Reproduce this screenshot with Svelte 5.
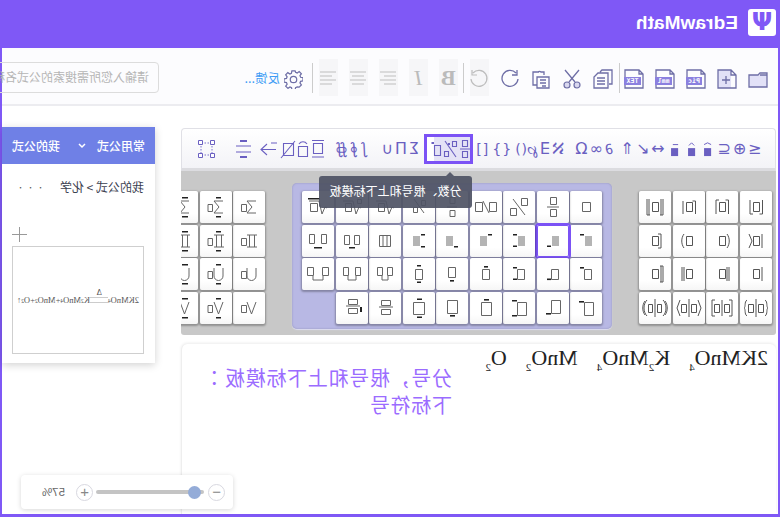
<script>
  // the whole page is shown flipped, so everything below is laid out left to right and mirrored once on .page
  const box = (x, y, w, h) => `M${x} ${y}h${w}v${h}h${-w}z`;

  const bar = (x, y, w = 4) => box(x, y, w, 1.6);
  const gray = (x = 10, w = 7) => box(x, 11, w, 10);

  const pre = { t: bar(18, 9), b: bar(18, 20.5), tb: bar(18, 9) + bar(18, 20.5) };
  const preL = { t: bar(10, 9), b: bar(10, 21), tb: bar(10, 9) + bar(10, 21) };

  const frac = (t = 6.5, w = 6, h = 7) => box(16 - w / 2 - 0.5, t, w, h) + box(16 - w / 2 - 0.5, 32 - t - h, w, h) + `M${16 - w} 16h${2 * w}`;

  const twoBoxes = (l, r, w, y, h) => box(l, y, w, h) + box(r, y, w, h);

  const purple = [
    [
      { o: box(11.5, 11.5, 8, 9) },
      { o: frac() },
      { o: box(7.5, 7.5, 6, 7) + box(18.5, 17.5, 6, 7) + 'M10 24L22 8' },
      { o: box(5.5, 11.5, 7, 9) + box(19.5, 11.5, 7, 9) + 'M13 22L19 10' },
      { o: frac(6.5, 5, 6) },
      { o: box(9.5, 9.5, 4, 5) + box(17.5, 16.5, 4, 5) + 'M11 22L21 8' },
      { o: 'M7 17l2-1 3 7 3-13h10' + box(16.5, 12.5, 6, 8) },
      { o: 'M7 17l2-1 3 7 3-13h10' + box(16.5, 12.5, 6, 8) + box(6.5, 8.5, 4, 4) },
      { o: 'M7 17l2-1 3 7 3-13h10' + box(16.5, 12.5, 7, 8), k: bar(14, 7, 12) }
    ],
    [
      { g: gray(), k: pre.t },
      { g: gray(), k: pre.b },
      { g: gray(), k: pre.tb },
      { g: gray(15), k: preL.t },
      { g: gray(15), k: preL.b },
      { g: gray(15), k: preL.tb },
      { o: box(10.5, 10.5, 11, 11) + 'M14 10.5v11M18 10.5v11' },
      { o: twoBoxes(8.5, 18.5, 5, 10.5, 9), k: bar(13, 22, 6) },
      { o: twoBoxes(7.5, 19.5, 5, 9.5, 9), k: bar(12, 22, 8) }
    ],
    [
      { o: box(10.5, 11.5, 7, 10), k: pre.t },
      { o: box(10.5, 11.5, 7, 10), k: pre.b },
      { o: box(10.5, 11.5, 7, 10), k: pre.tb },
      { o: box(12.5, 11.5, 7, 10), k: bar(14, 8) },
      { o: box(12.5, 9.5, 7, 10), k: bar(14, 22) },
      { o: box(12.5, 11.5, 7, 10), k: bar(14, 7) + bar(14, 23.5) },
      { o: twoBoxes(8.5, 18.5, 5, 9.5, 8) + 'M13 18v4h6v-4' },
      { o: twoBoxes(7.5, 19.5, 5, 9.5, 8) + 'M12 18v4h8v-4' },
      { o: twoBoxes(5.5, 20.5, 6, 9.5, 8) + 'M11 18v4h10v-4' }
    ],
    [
      { o: box(8.5, 10.5, 9, 13), k: bar(18, 9, 5) },
      { o: box(8.5, 8.5, 9, 13), k: bar(18, 21, 5) },
      { o: box(8.5, 10.5, 9, 13), k: bar(18, 8, 5) + bar(18, 23, 5) },
      { o: box(10.5, 10.5, 10, 13), k: bar(13, 7, 5) },
      { o: box(10.5, 8.5, 10, 13), k: bar(13, 23, 5) },
      { o: box(10.5, 10.5, 11, 12), k: bar(13, 6.5, 5) + bar(13, 24.5, 5) },
      { o: box(10.5, 8.5, 9, 5) + box(10.5, 17.5, 9, 5) + 'M8 15h14' },
      { o: box(10.5, 7.5, 9, 5) + box(10.5, 16.5, 9, 5) + 'M8 14h14', k: box(6, 15, 2, 5) },
      null
    ]
  ];

  const symbols = ['M9 10h9l-5 6 5 6h-9', 'M8 10h10M10.500 10v12M15.500 10v12M8 22h5M13 22h5', 'M9 10v8a4.500 4.500 0 0 0 9 0v-8', 'M9 10l4.500 12 4.500-12'];
  const nary = symbols.flatMap((s) => [
    { o: s + box(18.5, 13.5, 5, 7) },
    { o: s + box(19.5, 13.5, 4.5, 7), k: bar(11, 6, 5) + bar(11, 25, 5) },
    { o: s + box(18.5, 13.5, 5, 7), k: bar(10, 6, 6) + bar(10, 25, 6) }
  ]);
  const naryRows = [0, 1, 2, 3].map((i) => nary.slice(i * 3, i * 3 + 3));

  const inner = box(12.5, 11.5, 6, 9);
  const fence = [
    [
      { d: inner + 'M9.5 9v14h3M22 9v14h-3' },
      { d: inner + 'M9.5 23V9h3M22 23V9h-3' },
      { d: inner + 'M9.5 23V10h3M22 10v13' },
      { d: inner + 'M8 8v16h3M10 8v16M24 8v16h-3M22 8v16' }
    ],
    [
      { d: inner + 'M10 9v14M23 9l-3 7 3 7' },
      { d: inner + 'M11 9c-3 4-3 10 0 14' },
      { d: inner + 'M21 9c3 4 3 10 0 14' },
      { d: inner + 'M10 9v14h3M10 9h3' }
    ],
    [
      { d: inner + 'M10 9v14' },
      { d: inner + 'M9 9v14M11 9v14' },
      { d: inner + 'M21 9v14M23 9v14' },
      { d: inner + 'M8 8v16h3M10 8v16M8 8h3' }
    ],
    [
      { d: box(8.5, 12.5, 5, 8) + box(18.5, 12.5, 5, 8) + 'M16 7v18M7 8c-3 2-1 7-3 8 2 1 0 6 3 8M25 8c3 2 1 7 3 8-2 1 0 6-3 8' },
      { d: box(8.5, 12.5, 5, 8) + box(18.5, 12.5, 5, 8) + 'M16 8v16M6 8v16h3M6 8h3M26 8v16h-3M26 8h-3' },
      { d: box(8.5, 12.5, 5, 8) + box(18.5, 12.5, 5, 8) + 'M16 7v18M7 8l-3 8 3 8M25 8l3 8-3 8' },
      { d: box(9.5, 12.5, 4, 8) + box(18.5, 12.5, 4, 8) + 'M16 7v18M8 8c-4 4-4 12 0 16M24 8c4 4 4 12 0 16M6 9c-3 4-3 10 0 14M26 9c3 4 3 10 0 14' }
    ]
  ];

  const glyphGroups = [
    ['≤', '⊕', '⊆'],
    null,
    ['↔', '↙', '⇑'],
    ['∂', '∞', 'Ω'],
    ['ℵ', '∃', '℘'],
    ['()', '{}', '[]'],
    'selected',
    ['Σ', 'Π', '∪'],
    ['∫', '∮', '∯']
  ];
</script>

<div class="page">
  <header class="head">
    <div class="logo">Ψ</div>
    <span class="brand">EdrawMath</span>
  </header>

  <div class="content">
    <div class="toolbar">
      <div class="tgroup">
        <svg class="ti" viewBox="0 0 20 20"><path class="lav" d="M1 6h18v12H1z" /><path class="ln" d="M1 18V4h7l2 2h9v12zM1 6h7" /></svg>
        <svg class="ti" viewBox="0 0 20 20"><path class="lav" d="M6 1h13v18H6z" /><path class="ln" d="M6 1h13v18H1V6zM6 1v5H1M7 11h8M11 7v8" /></svg>
        <svg class="ti" viewBox="0 0 20 20"><path class="ln" d="M5 1h14v18H1V5zM5 1v4H1" /><path class="tag" d="M4 8h16v8H4z" /><text class="tt" x="12" y="14.3">Pic</text></svg>
        <svg class="ti" viewBox="0 0 20 20"><path class="ln" d="M5 1h14v18H1V5zM5 1v4H1" /><path class="tag" d="M3 8h17v8H3z" /><text class="tt" x="11.5" y="14.3">mml</text></svg>
        <svg class="ti" viewBox="0 0 20 20"><path class="ln" d="M5 1h14v18H1V5zM5 1v4H1" /><path class="tag" d="M3 8h17v8H3z" /><text class="tt" x="11.5" y="14.3">TEX</text></svg>
      </div>
      <i class="sep one"></i>
      <div class="tgroup">
        <svg class="ti" viewBox="0 0 20 20"><path class="ln" d="M4 15H1V1h10l2 2M5 4h10l4 4v11H5zM8 9h8M8 12h8M8 15h8" /></svg>
        <svg class="ti" viewBox="0 0 20 20"><path class="ln" d="M3 1l10 12M17 1L7 13" /><circle class="scis" cx="5" cy="16" r="3" /><circle class="scis" cx="15" cy="16" r="3" /></svg>
        <svg class="ti" viewBox="0 0 20 20"><path class="ln" d="M12 3h6v13h-4M7 6V3h3a2 2 0 0 1 3 0M2 8h12v11H2zM5 11h6M5 14h6M5 17h4" /></svg>
        <svg class="ti" viewBox="0 0 20 20"><path class="ln" d="M4 4A8 8 0 1 1 2 10M3 1v5h5" /></svg>
        <span class="fmt"><svg class="ti bare" viewBox="0 0 20 20"><path class="lng" d="M16 4A8 8 0 1 0 18 10M17 1v5h-5" /></svg></span>
      </div>
      <i class="sep two"></i>
      <div class="tgroup">
        <span class="fmt bold">B</span>
        <span class="fmt ital">I</span>
        {#each [0, 1, 2] as a}
          <span class="fmt">
            <svg width="18" height="14" viewBox="0 0 18 14"><path class="lng" d="M1 1h16M{a === 0 ? 1 : a === 1 ? 3 : 5} 5h12M1 9h16M{a === 0 ? 1 : a === 1 ? 3 : 5} 13h12" /></svg>
          </span>
        {/each}
      </div>
      <i class="sep three"></i>
      <svg class="gear" viewBox="0 0 20 20"><path class="ln" d="M8.3 1h3.4l.5 2.6 1.6.7 2.2-1.5 2.2 2.3-1.5 2.1.7 1.7 2.6.4v3.4l-2.6.5-.7 1.6 1.5 2.2-2.4 2.3-2.1-1.5-1.6.7-.5 2.4H8.3l-.5-2.4-1.7-.7L4 18.1l-2.3-2.3 1.5-2.2-.7-1.6L0 11.5V8.1l2.5-.4.7-1.7-1.5-2.1L4 1.6l2.1 1.5 1.7-.7z" /><circle class="ln" cx="10" cy="10" r="3.4" /></svg>
      <span class="feedback">反馈...</span>
      <div class="search">请输入您所需搜索的公式名称</div>
    </div>

    <div class="work">
      <div class="editor">
        <div class="symbar">
          {#each glyphGroups as group}
            {#if group === 'selected'}
              <div class="symgroup picked">
                <svg width="42" height="24" viewBox="0 0 42 24">
                  <path class="sy" d="M2.500 3.500h5v6h-5zM2.500 14.500h5v6h-5zM0 12h10" />
                  <path class="sy" d="M13.500 4.500h4v5h-4zM21.500 14.500h4v5h-4zM14 20L25 4" />
                  <path class="sy" d="M29.500 8.500h6v10h-6z" />
                  <path class="sf" d="M36 5h2.500v2H36zM20 6h2v2h-2z" />
                </svg>
              </div>
            {:else if group === null}
              <div class="symgroup">
                {#each [0, 1, 2] as b}
                  <svg class="accent" width="10" height="16" viewBox="0 0 10 16">
                    <path class="sf" d="M1 7h8v9H1z" />
                    <path class="sy" d={b === 0 ? 'M1 3l4-2 4 2' : b === 1 ? 'M2 4l3-3 3 3' : 'M1 3h6'} />
                  </svg>
                {/each}
              </div>
            {:else}
              <div class="symgroup glyphs" class:tight={group[0] === '()'}>
                {#each group as g}<span>{g}</span>{/each}
              </div>
            {/if}
          {/each}
          <div class="symgroup">
            <svg width="46" height="20" viewBox="0 0 46 20">
              <path class="sy" d="M3.500 4.500h9v10h-9zM2 1.500h12M2 18h12M18.500 7.500h9v10h-9zM19 5c2-3 6-3 8 0" />
              <path class="sy" d="M32.500 4.500h10v12h-10zM31 2l14 17" />
            </svg>
          </div>
          <div class="symgroup">
            <svg width="46" height="20" viewBox="0 0 46 20">
              <path class="sy" d="M2 10.500h15M11 5l6 5.500-6 5.500M1 4h6" />
              <path class="sy" d="M27 7h15M27 13h15" />
              <path class="sf" d="M31 1h7v2h-7zM31 17h7v2h-7z" />
            </svg>
          </div>
          <div class="symgroup">
            <svg width="17" height="18" viewBox="0 0 17 18">
              <path class="dash" d="M3 3h11M3 15h11M3 3v12M14 3v12" />
              <path class="handle" d="M.5.5h4v4h-4zM12.500.5h4v4h-4zM.5 13.500h4v4h-4zM12.500 13.500h4v4h-4z" />
            </svg>
          </div>
        </div>

        <div class="palette">
          <div class="cells fence">
            {#each fence as row}
              {#each row as c}
                <div class="cell"><svg width="32" height="32" viewBox="0 0 32 32"><path class="fc" d={c.d} /></svg></div>
              {/each}
            {/each}
          </div>

          <div class="hilite">
            <div class="cells nine">
              {#each purple as row, r}
                {#each row as c, i}
                  {#if c}
                    <div class="cell" class:active={r === 1 && i === 1}>
                      <svg width="32" height="32" viewBox="0 0 32 32">
                        {#if c.g}<path class="cg" d={c.g} />{/if}
                        {#if c.o}<path class="co" d={c.o} />{/if}
                        {#if c.k}<path class="ck" d={c.k} />{/if}
                      </svg>
                    </div>
                  {:else}
                    <div></div>
                  {/if}
                {/each}
              {/each}
            </div>
          </div>

          <div class="cells three">
            {#each naryRows as row}
              {#each row as c}
                <div class="cell">
                  <svg width="32" height="32" viewBox="0 0 32 32">
                    <path class="co" d={c.o} />
                    {#if c.k}<path class="ck" d={c.k} />{/if}
                  </svg>
                </div>
              {/each}
            {/each}
          </div>
        </div>

        <div class="tip">分数、根号和上下标模板</div>

        <div class="paper">
          <div class="formula">2KMnO<sub>4</sub><b></b>K<sub>2</sub>MnO<sub>4</sub><b></b>MnO<sub>2</sub><b></b>O<sub>2</sub></div>
          <div class="note">分号，根号和上下标模板<span class="colon">：</span><br />下标符号</div>
        </div>
      </div>

      <aside class="side">
        <div class="tabs">
          <span>常用公式</span>
          <svg width="8" height="6" viewBox="0 0 8 6"><path d="M1 1l3 3 3-3" /></svg>
          <span>我的公式</span>
        </div>
        <div class="crumbs">
          <span>我的公式 &gt; 化学</span>
          <span class="dots">•••</span>
        </div>
        <svg class="plus" width="15" height="15" viewBox="0 0 15 15"><path d="M7.500 0v15M0 7.500h15" /></svg>
        <div class="thumb">
          <span class="mini">2KMnO<sub>4</sub><span class="eq"><em>Δ</em></span>K<sub>2</sub>MnO<sub>4</sub>+MnO<sub>2</sub>+O<sub>2</sub>↑</span>
        </div>
      </aside>
    </div>
  </div>

  <div class="zoombar">
    <span class="round">−</span>
    <div class="track"><i></i></div>
    <span class="round">+</span>
    <span class="pct">57%</span>
  </div>
</div>

<style>
  :global(body) {
    margin: 0;
    background: #fff;
  }

  .page {
    position: relative;
    width: 780px;
    height: 517px;
    box-sizing: border-box;
    padding: 0 2px 3px;
    background: #7f58f6;
    display: flex;
    flex-direction: column;
    overflow: hidden;
    transform: scaleX(-1);
    font-family: "Noto Sans CJK SC", "Liberation Sans", sans-serif;
  }

  .head {
    height: 48px;
    flex: none;
    display: flex;
    align-items: center;
    gap: 10px;
    padding: 0 0 3px 2px;
    box-sizing: border-box;
  }

  .logo {
    width: 28px;
    height: 27px;
    background: #fff;
    border-radius: 3px;
    color: #7f58f6;
    font: bold 24px/27px "DejaVu Sans", sans-serif;
    text-align: center;
  }

  .brand {
    color: #fff;
    font: bold 19px "Liberation Sans", sans-serif;
    letter-spacing: 0.1px;
  }

  .content {
    flex: 1;
    min-height: 0;
    background: #fff;
    display: flex;
    flex-direction: column;
  }

  .toolbar {
    height: 58px;
    flex: none;
    box-sizing: border-box;
    display: flex;
    align-items: center;
    padding: 3px 0 0 10px;
    background: #fcfcfe;
    border-bottom: 2px solid #ececf0;
  }

  .tgroup {
    display: flex;
    align-items: center;
    gap: 11px;
  }

  .ti {
    width: 20px;
    height: 20px;
    flex: none;
    margin-top: 3px;
  }

  .ti.bare {
    margin-top: 3px;
  }

  path {
    fill: none;
  }

  .ln {
    fill: none;
    stroke: #6e6ea6;
    stroke-width: 1.3;
  }

  .lng {
    fill: none;
    stroke: #bdbdbd;
    stroke-width: 1.2;
  }

  .lav {
    fill: #e2e1f7;
  }

  .tag {
    fill: #8b80df;
  }

  .tt {
    fill: #fff;
    font: bold 6.5px "DejaVu Sans Mono", monospace;
    text-anchor: middle;
  }

  .scis {
    fill: #d9d8ef;
    stroke: #6e6ea6;
    stroke-width: 1.2;
  }

  .sep {
    width: 1px;
    height: 30px;
    background: #ccc;
    flex: none;
  }

  .sep.one {
    margin: 0 6px 0 4px;
  }

  .sep.two {
    margin: 0 5px 0 6px;
  }

  .sep.three {
    margin: 0 9px 0 6px;
  }

  .fmt {
    width: 19px;
    height: 37px;
    flex: none;
    background: #f6f6f8;
    color: #bbb;
    display: flex;
    align-items: center;
    justify-content: center;
    font: 22px/1 "Liberation Serif", serif;
  }

  .bold {
    font-weight: bold;
  }

  .ital {
    font-style: italic;
  }

  .gear {
    width: 19px;
    height: 19px;
    flex: none;
    margin-top: 3px;
  }

  .feedback {
    margin-left: 4px;
    width: 121px;
    flex: none;
    color: #3f9cf5;
    font-size: 12.5px;
  }

  .search {
    flex: none;
    width: 200px;
    height: 31px;
    box-sizing: border-box;
    border: 1px solid #dcdcdc;
    border-radius: 4px;
    padding-left: 9px;
    color: #b5b5b5;
    font-size: 12px;
    line-height: 28px;
    white-space: nowrap;
    overflow: hidden;
  }

  .work {
    flex: 1;
    min-height: 0;
    display: flex;
    align-items: flex-start;
    padding-left: 2px;
  }

  .editor {
    position: relative;
    width: 595px;
    flex: none;
    margin-top: 22px;
  }

  .symbar {
    height: 43px;
    box-sizing: border-box;
    padding-left: 11px;
    display: flex;
    align-items: center;
    background: linear-gradient(#fff, #f3f3f7);
    border: 1px solid #e0e0e6;
    border-bottom: 3px solid #dcdce0;
    border-radius: 4px 4px 0 0;
  }

  .symgroup {
    width: 48.5px;
    flex: none;
    display: flex;
    justify-content: center;
    align-items: center;
    gap: 2px;
  }

  .symgroup.glyphs {
    color: #6a5fc1;
    font: 16px "DejaVu Sans", sans-serif;
    white-space: nowrap;
  }

  .symgroup.tight {
    font-size: 14px;
    gap: 3px;
    letter-spacing: 1px;
    margin-left: -4px;
    margin-right: 4px;
  }

  .accent {
    margin: 0 3px;
  }

  .picked {
    height: 30px;
    box-sizing: border-box;
    border: 3px solid #7b52f5;
    background: linear-gradient(90deg, #e4e2f6 0 36px, #fff 36px);
  }

  .sy {
    fill: none;
    stroke: #6a5fc1;
    stroke-width: 1.1;
  }

  .sf {
    fill: #6a5fc1;
  }

  .dash {
    fill: none;
    stroke: #7a70cc;
    stroke-dasharray: 1.5 1.5;
  }

  .handle {
    fill: #fff;
    stroke: #6a5fc1;
  }

  .palette {
    height: 164px;
    box-sizing: border-box;
    background: #c8c8c8;
    display: flex;
    align-items: flex-start;
    overflow: hidden;
    padding: 20px 0 0 4px;
    border-radius: 0 0 3px 3px;
  }

  .cells {
    display: grid;
    gap: 1.5px;
    grid-auto-rows: 32px;
    flex: none;
  }

  .fence {
    grid-template-columns: repeat(4, 32px);
  }

  .nine {
    grid-template-columns: repeat(9, 32px);
  }

  .three {
    grid-template-columns: repeat(3, 32px);
    margin-left: 27px;
  }

  .hilite {
    margin: -8px 0 0 27px;
    padding: 8px 10px 5px 10px;
    background: #b8b8e4;
    border-radius: 5px;
    box-shadow: inset 0 0 2px #9090b8, 0 1px 1px #dcdcf0;
  }

  .cell {
    background: linear-gradient(#fff 70%, #f6f6f6);
    border-radius: 2px;
    box-shadow: 0 1px 2px 1px rgba(0, 0, 0, 0.28);
    box-sizing: border-box;
  }

  .cell svg {
    display: block;
  }

  .cell.active {
    box-shadow: 0 0 0 2px #7b52f5, inset 0 0 0 1px #7b52f5;
  }

  .co {
    fill: none;
    stroke: #666;
    stroke-width: 1;
  }

  .fc {
    fill: none;
    stroke: #555;
    stroke-width: 1;
  }

  .cg {
    fill: #b4b4b4;
  }

  .ck {
    fill: #222;
  }

  .tip {
    position: absolute;
    left: 304px;
    top: 48px;
    width: 153px;
    height: 32px;
    box-sizing: border-box;
    background: rgba(78, 82, 100, 0.92);
    border-radius: 3px;
    color: #fff;
    font-size: 12px;
    line-height: 30px;
    text-align: center;
  }

  .tip::before {
    content: "";
    position: absolute;
    left: 18px;
    top: -4px;
    border: 4px solid transparent;
    border-top: 0;
    border-bottom-color: rgba(78, 82, 100, 0.92);
  }

  .paper {
    margin-top: 9px;
    height: 170px;
    box-sizing: border-box;
    display: flex;
    border-radius: 6px 6px 0 0;
    background: #fff;
    box-shadow: 0 -1px 3px rgba(0, 0, 0, 0.08);
    padding-left: 8px;
    border-right: 1px solid #eee;
  }

  .formula {
    width: 316px;
    flex: none;
    font: 22px/26px "Liberation Serif", serif;
    color: #222;
    white-space: nowrap;
    padding-top: 1px;
  }

  .formula sub {
    font-size: 11px;
    line-height: 0;
    vertical-align: -6px;
  }

  .formula b {
    display: inline-block;
    width: 19px;
  }

  .note {
    margin-top: 20px;
    font-size: 20px;
    letter-spacing: 0.7px;
    line-height: 27px;
    color: #9b6cff;
    white-space: nowrap;
  }

  .colon {
    font-family: "Noto Sans CJK TC", sans-serif;
  }

  .side {
    width: 153px;
    height: 236px;
    flex: none;
    margin: 21px 0 0 26px;
    background: #fff;
    box-shadow: 0 2px 8px rgba(0, 0, 0, 0.18);
    font-size: 12px;
  }

  .tabs {
    height: 37px;
    background: #6f80e6;
    color: #fff;
    display: flex;
    align-items: center;
    padding-left: 10px;
    font-weight: 500;
  }

  .tabs svg {
    margin: 0 0 0 11px;
  }

  .tabs svg + span {
    margin-left: 18px;
  }

  .tabs path {
    stroke: #fff;
    stroke-width: 1.5;
  }

  .crumbs {
    display: flex;
    justify-content: space-between;
    padding: 14px 12px 0 11px;
    color: #3b4050;
    line-height: 18px;
  }

  .dots {
    font-size: 7px;
    letter-spacing: 3px;
    color: #555;
  }

  .plus {
    display: block;
    margin: 31px 0 0 128px;
  }

  .plus path {
    stroke: #999;
  }

  .thumb {
    width: 132px;
    height: 108px;
    box-sizing: border-box;
    margin: 4px 0 0 11px;
    border: 1px solid #cfcfcf;
    display: flex;
    align-items: center;
    justify-content: center;
  }

  .mini {
    font: 8.5px "Liberation Serif", serif;
    color: #555;
    white-space: nowrap;
    display: inline-flex;
    align-items: baseline;
  }

  .mini sub {
    font-size: 5.5px;
  }

  .eq {
    position: relative;
    width: 18px;
    height: 4px;
    border-top: 1px solid #ccc;
    border-bottom: 1px solid #ccc;
    align-self: center;
  }

  .eq em {
    position: absolute;
    left: 6px;
    top: -11px;
    font-style: normal;
  }

  .zoombar {
    position: absolute;
    left: 547px;
    top: 475px;
    width: 212px;
    height: 34px;
    background: #fff;
    border-radius: 4px;
    box-shadow: 0 1px 5px rgba(0, 0, 0, 0.16);
    display: flex;
    align-items: center;
    padding-left: 8px;
    box-sizing: border-box;
    color: #888;
  }

  .round {
    width: 17px;
    height: 17px;
    box-sizing: border-box;
    border: 1px solid #d8d8e0;
    border-radius: 50%;
    font: 15px/14px "Liberation Sans", sans-serif;
    text-align: center;
    flex: none;
  }

  .track {
    position: relative;
    width: 108px;
    height: 4px;
    margin: 0 3px 0 4px;
    background: #c4c4c4;
    border-radius: 2px;
  }

  .track i {
    position: absolute;
    left: 3px;
    top: -4px;
    width: 13px;
    height: 13px;
    border-radius: 50%;
    background: #94acd8;
  }

  .pct {
    margin-left: 11px;
    font: 11.5px "Liberation Sans", sans-serif;
    color: #666;
  }
</style>
